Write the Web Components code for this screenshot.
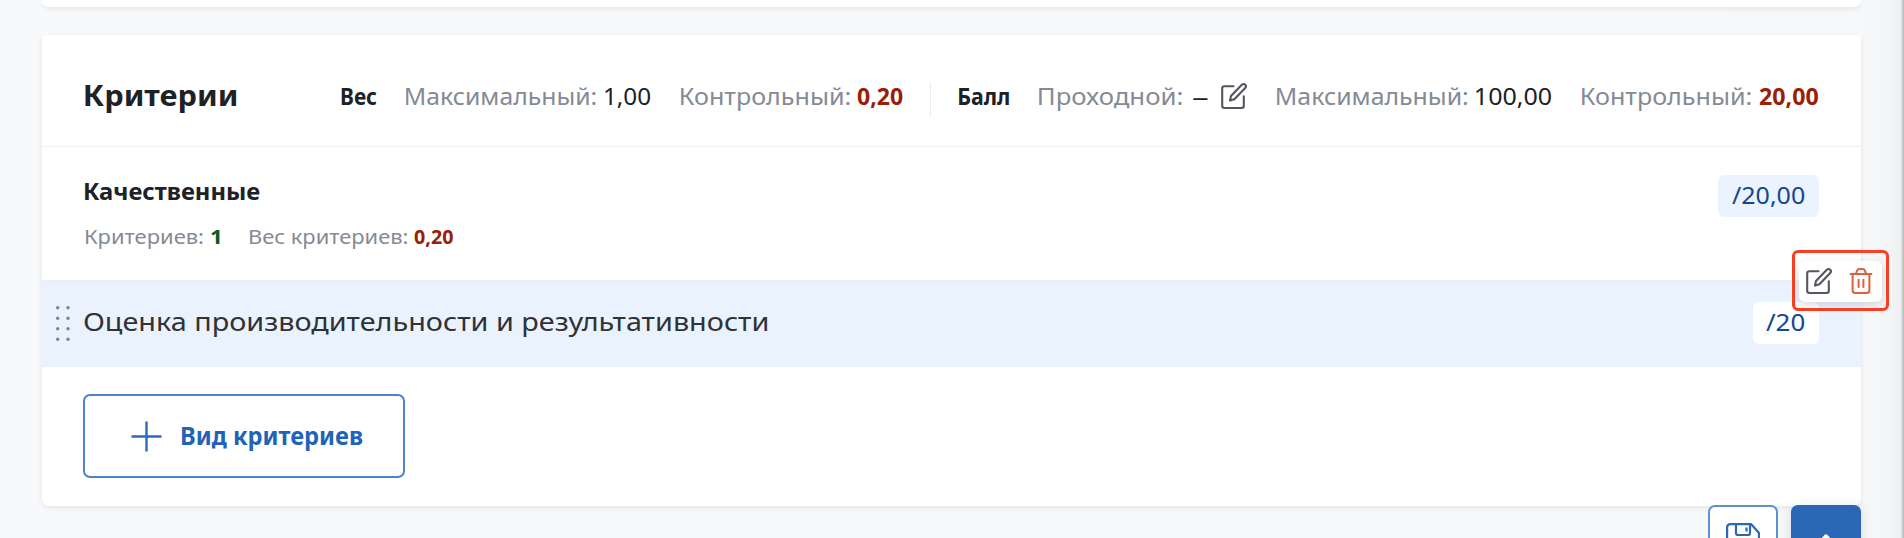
<!DOCTYPE html>
<html lang="ru">
<head>
<meta charset="utf-8">
<title>Критерии</title>
<style>
html,body{margin:0;height:538px;overflow:hidden}
body{font-family:"Noto Sans","Open Sans",sans-serif;color:#202124}
</style>
</head>
<body>
<criteria-page></criteria-page>
<script>
const define = (name, html, ready) => customElements.define(name, class extends HTMLElement {
  constructor() {
    super();
    this.attachShadow({mode: 'open'}).innerHTML = html;
  }
  connectedCallback() { if (ready) ready.call(this, this.shadowRoot); }
});

/* A line of text condensed or widened to the width given in "w" */
const ctx = document.createElement('canvas').getContext('2d');
define('fit-text', `<style>
:host{display:block;flex:none;white-space:nowrap;font-size:23px;line-height:34px;font-weight:400}
:host([b]){font-weight:700}
:host([muted]){color:#858a95}
:host([red]){color:#992006}
:host([green]){color:#0b5a24}
:host([navy]){color:#134792}
span{display:block;width:max-content;transform-origin:0 50%}
</style><span><slot></slot></span>`, function (root) {
  const text = this.textContent.trim();
  if (!text) return;
  const w = +this.getAttribute('w'), size = this.getAttribute('size');
  if (size) this.style.fontSize = size + 'px';
  this.style.width = w + 'px';
  const cs = getComputedStyle(this);
  ctx.font = `${cs.fontWeight} ${cs.fontSize} ${cs.fontFamily}`;
  const m = ctx.measureText(text);
  const k = w / (m.actualBoundingBoxRight + m.actualBoundingBoxLeft);
  root.querySelector('span').style.transform = `translateX(${m.actualBoundingBoxLeft * k}px) scaleX(${k})`;
});

/* Hands the host's own text to the fit-text in its shadow root */
const fillLabel = function (root) {
  const t = root.querySelector('fit-text[label]');
  t.replaceWith(Object.assign(t.cloneNode(), {textContent: this.textContent}));
};

define('edit-icon', `<style>:host{display:block;flex:none;width:26px;height:26px;color:#53565c}svg{display:block;overflow:visible}</style>
<svg width="26" height="26" viewBox="0 0 26 26" fill="none" stroke="currentColor" stroke-width="2.100" stroke-linejoin="round" stroke-linecap="round">
<path d="M12.500 3.200H3.400Q1.200 3.200 1.200 5.400V22.800Q1.200 25 3.400 25H20.600Q22.800 25 22.800 22.800V13.200"/>
<path d="M9 17.600L10 12.900L20.800 1.800Q22.600 .2 24.200 1.700Q25.800 3.200 24.200 5L13.400 16.200Z"/></svg>`);

define('trash-icon', `<style>:host{display:block;flex:none;width:22px;height:26px;color:#d9623f}svg{display:block;overflow:visible}</style>
<svg width="22" height="26" viewBox="0 0 22 26" fill="none" stroke="currentColor" stroke-width="2" stroke-linecap="round" stroke-linejoin="round">
<path d="M.6 6H21.400M2.600 6V22.600Q2.600 25 5 25H17Q19.400 25 19.400 22.600V6M6 5.600L7.200 2.400Q7.800 1 9.200 1H12.800Q14.200 1 14.800 2.400L16 5.600"/>
<path d="M8.600 11.800V19M13.400 11.800V19"/></svg>`);

define('save-icon', `<style>:host{display:block}svg{display:block}</style>
<svg width="34" height="34" viewBox="0 0 34 34" fill="none" stroke="#2a68b5" stroke-width="2.200" stroke-linejoin="round">
<path d="M4.500 1.100H25L33 10V29.500Q33 33 29.500 33H4.500Q1.100 33 1.100 29.500V4.500Q1.100 1.100 4.500 1.100Z"/><path d="M10 1V10Q10 12 12 12H22Q24 12 24 10V1"/><path d="M20.500 4.500V8.500"/><path d="M8 33V20H26V33"/></svg>`);

define('score-badge', `<style>:host{box-sizing:border-box;display:block;flex:none;height:42px;padding:2.500px 14px;border-radius:6px;background:#eaf3fe}
:host([plain]){background:#fff;padding:2.500px 14px 4px 13px}</style><slot></slot>`);

define('criteria-header', `<style>
:host{box-sizing:border-box;display:flex;align-items:baseline;height:112px;padding:43px 0 0 42.500px;border-bottom:1.500px solid #eef1f4}
.line{display:flex;align-items:baseline;margin-top:-1px}
.pair{display:flex;align-items:baseline}
i{flex:none;align-self:flex-start;width:1px;height:34px;margin:3px 28px 0 27px;background:#eaebf0}
edit-icon{align-self:flex-start;margin:4px 29.500px 0 13px}
.line{position:relative;top:-1px}
</style>
<fit-text b size="28.500" w="151">Критерии</fit-text>
<div class="line">
<fit-text b w="36" style="margin-left:105px">Вес</fit-text>
<div class="pair" style="margin-left:29.500px;gap:9px"><fit-text muted w="190">Максимальный:</fit-text><fit-text w="46">1,00</fit-text></div>
<div class="pair" style="margin-left:29.500px;gap:7.500px"><fit-text muted w="169">Контрольный:</fit-text><fit-text b red w="46">0,20</fit-text></div>
<i></i>
<fit-text b w="50">Балл</fit-text>
<div class="pair" style="margin-left:30px;gap:10px"><fit-text muted w="143">Проходной:</fit-text><fit-text w="16">–</fit-text></div>
<edit-icon></edit-icon>
<div class="pair" style="gap:9px"><fit-text muted w="190.500">Максимальный:</fit-text><fit-text w="76">100,00</fit-text></div>
<div class="pair" style="margin-left:29.500px;gap:8px"><fit-text muted w="169">Контрольный:</fit-text><fit-text b red w="59.500">20,00</fit-text></div>
</div>`);

define('criteria-group', `<style>
:host{box-sizing:border-box;display:flex;justify-content:space-between;align-items:flex-start;height:133px;padding:28px 42px 0 42.500px}
.meta{display:flex;padding-top:11px}
</style>
<div><fit-text b size="22.500" w="175">Качественные</fit-text>
<div class="meta"><fit-text muted size="20" w="117.500">Критериев:</fit-text><fit-text b green size="20" w="9" style="margin-left:8.500px">1</fit-text><fit-text muted size="20" w="158" style="margin-left:29px">Вес критериев:</fit-text><fit-text b red size="20" w="39" style="margin-left:7.500px">0,20</fit-text></div></div>
<score-badge><fit-text navy w="73">/20,00</fit-text></score-badge>`);

define('row-actions', `<style>
:host{position:absolute;top:-31px;right:-28px;box-sizing:border-box;width:97px;height:61px;border:3px solid #fb3f20;border-radius:6px;padding:8px 4px 6px}
div{box-sizing:border-box;height:41px;width:83px;background:#fff;border-radius:6px;display:flex;gap:18px;padding:7px;box-shadow:0 3px 8px rgba(60,80,110,.2)}
</style><div><edit-icon></edit-icon><trash-icon></trash-icon></div>`);

define('criteria-row', `<style>
:host{position:relative;box-sizing:border-box;display:flex;align-items:flex-start;height:87px;padding:22px 42px 0 14px;background:#eaf2fe;border-top:1px solid #e9eef4;border-bottom:1px solid #eef1f5}
.grip{flex:none;width:14px;height:35px;margin:2.500px 13px 0 0}
score-badge{margin-left:auto;margin-top:-1px}
</style>
<svg class="grip" viewBox="0 0 14 35" fill="#7b858f"><circle cx="1.700" cy="1.700" r="1.700"/><circle cx="1.700" cy="12.200" r="1.700"/><circle cx="1.700" cy="22.800" r="1.700"/><circle cx="1.700" cy="33.300" r="1.700"/><circle cx="12" cy="1.700" r="1.700"/><circle cx="12" cy="12.200" r="1.700"/><circle cx="12" cy="22.800" r="1.700"/><circle cx="12" cy="33.300" r="1.700"/></svg>
<fit-text label size="26" w="683" style="color:#303235;margin-top:1px;margin-left:.5px"></fit-text>
<score-badge plain><fit-text navy w="39">/20</fit-text></score-badge>
<row-actions></row-actions>`, fillLabel);

define('add-button', `<style>
:host{box-sizing:border-box;display:flex;align-items:center;width:322px;height:84px;border:2px solid #4a83ca;border-radius:7px;padding:0 0 2px 45.500px;background:#fff;color:#2163b7}
svg{flex:none;margin-right:20.500px;position:relative;top:1px}
</style><svg width="31" height="31" stroke="#2d6ab9" stroke-width="2.400"><path d="M15.500 .5V30.500M.5 15.500H30.500"/></svg>
<fit-text label b size="25.200" w="181"></fit-text>`, fillLabel);

define('floating-actions', `<style>
:host{position:absolute;left:1708px;top:505px;display:flex;gap:13px}
div{box-sizing:border-box;width:70px;height:70px;border-radius:7px}
.save{border:2px solid #5c91d2;background:#fff;padding:16px 0 0 16px}
.up{background:#2a68b6;padding:28px 0 0 23px;box-shadow:0 2px 12px rgba(40,70,110,.16)}
svg{display:block}
</style><div class="save"><save-icon></save-icon></div>
<div class="up"><svg width="24" height="16" fill="none" stroke="#fff" stroke-width="3.500" stroke-linecap="round" stroke-linejoin="round"><path d="M2 14L12 3L22 14"/></svg></div>`);

define('criteria-page', `<style>
:host{position:relative;box-sizing:border-box;display:block;width:1904px;height:538px;overflow:hidden;background:linear-gradient(90deg,#f8f9fb 0,#f7f8fa 1860px,#f4f5f7 1885px,#eff0f2 1901px,#cfcfd1 1902px,#bdbdbf 1904px);padding:0 43px 0 42px}
section{background:#fff;box-shadow:0 2px 5px rgba(60,70,90,.1)}
.prev{height:7px;border-radius:0 0 7px 7px;margin-bottom:28px}
.card{height:470.500px;border-radius:2px 2px 7px 7px}
footer{padding:27px 0 0 41.400px}
</style>
<section class="prev"></section>
<section class="card">
<criteria-header></criteria-header>
<criteria-group></criteria-group>
<criteria-row>Оценка производительности и результативности</criteria-row>
<footer><add-button>Вид критериев</add-button></footer>
</section>
<floating-actions></floating-actions>`);
</script>
</body>
</html>
